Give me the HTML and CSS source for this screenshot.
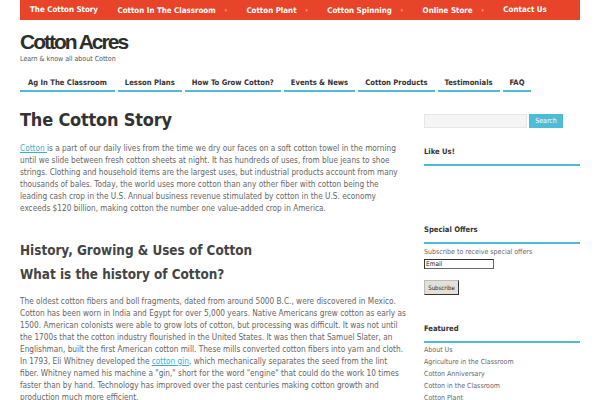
FILE: index.html
```html
<!DOCTYPE html>
<html>
<head>
<meta charset="utf-8">
<link rel="stylesheet" href="styles.css">
</head>
<body>
<div class="page">
  <nav class="topnav">
    <a>The Cotton Story</a>
    <a>Cotton In The Classroom <span class="caret">&#9662;</span></a>
    <a>Cotton Plant <span class="caret">&#9662;</span></a>
    <a>Cotton Spinning <span class="caret">&#9662;</span></a>
    <a>Online Store <span class="caret">&#9662;</span></a>
    <a>Contact Us</a>
  </nav>
  <header class="brand">
    <div class="site-title">Cotton Acres</div>
    <div class="tagline">Learn &amp; know all about Cotton</div>
  </header>
  <nav class="subnav">
    <a>Ag In The Classroom</a>
    <a>Lesson Plans</a>
    <a>How To Grow Cotton?</a>
    <a>Events &amp; News</a>
    <a>Cotton Products</a>
    <a>Testimonials</a>
    <a>FAQ</a>
  </nav>
  <div class="columns">
    <main class="content">
      <h1>The Cotton Story</h1>
      <p><a class="link">Cotton </a>is a part of our daily lives from the time we dry our faces on a soft cotton towel in the morning until we slide between fresh cotton sheets at night. It has hundreds of uses, from blue jeans to shoe strings. Clothing and household items are the largest uses, but industrial products account from many thousands of bales. Today, the world uses more cotton than any other fiber with cotton being the leading cash crop in the U.S. Annual business revenue stimulated by cotton in the U.S. economy exceeds $120 billion, making cotton the number one value-added crop in America.</p>
      <h2>History, Growing &amp; Uses of Cotton</h2>
      <h2 class="q">What is the history of Cotton?</h2>
      <p>The oldest cotton fibers and boll fragments, dated from around 5000 B.C., were discovered in Mexico. Cotton has been worn in India and Egypt for over 5,000 years. Native Americans grew cotton as early as 1500. American colonists were able to grow lots of cotton, but processing was difficult. It was not until the 1700s that the cotton industry flourished in the United States. It was then that Samuel Slater, an Englishman, built the first American cotton mill. These mills converted cotton fibers into yarn and cloth. In 1793, Eli Whitney developed the <a class="link">cotton gin</a>, which mechanically separates the seed from the lint fiber. Whitney named his machine a "gin," short for the word "engine" that could do the work 10 times faster than by hand. Technology has improved over the past centuries making cotton growth and production much more efficient.</p>
    </main>
    <aside class="sidebar">
      <div class="search">
        <div class="search-box"></div>
        <div class="search-btn">Search</div>
      </div>
      <div class="widget like">
        <h3>Like Us!</h3>
      </div>
      <div class="widget offers">
        <h3>Special Offers</h3>
        <div class="sub-text">Subscribe to receive special offers</div>
        <div class="email">Email</div>
        <div class="subscribe">Subscribe</div>
      </div>
      <div class="widget featured">
        <h3>Featured</h3>
        <ul>
          <li>About Us</li>
          <li>Agriculture in the Classroom</li>
          <li>Cotton Anniversary</li>
          <li>Cotton in the Classroom</li>
          <li>Cotton Plant</li>
        </ul>
      </div>
    </aside>
  </div>
</div>
</body>
</html>
```
FILE: styles.css
```css
* { box-sizing: border-box; }
html, body { margin: 0; padding: 0; background: #fff; }
body {
  font-family: "DejaVu Sans Condensed", "DejaVu Sans", sans-serif;
  font-stretch: condensed;
  color: #555;
  overflow: hidden;
}
.page { width: 560px; margin: 0 0 0 20px; }

.topnav {
  display: flex;
  height: 20px;
  background: #e8442a;
  padding-left: 10px;
  position: relative;
}
.topnav::before, .topnav::after {
  content: "";
  position: absolute;
  top: 16px;
  height: 6px;
  border-radius: 50%;
  box-shadow: 0 4px 3px rgba(0,0,0,0.55);
  z-index: -1;
}
.topnav::before { left: 6px; width: 95px; transform: rotate(-1.5deg); }
.topnav::after { right: 4px; width: 80px; transform: rotate(1.5deg); }
.topnav a {
  color: #fff;
  font-weight: bold;
  font-size: 7.9px;
  line-height: 20px;
  margin-right: 19.5px;
  white-space: nowrap;
}
.caret { color: #f4a090; font-size: 5px; margin-left: 6.5px; vertical-align: 1px; }

.brand { padding-top: 11px; }
.site-title {
  font-family: "Liberation Sans", sans-serif;
  font-stretch: normal;
  font-weight: bold;
  font-size: 21px;
  letter-spacing: -2px;
  color: #2e2e2e;
  line-height: 22px;
}
.tagline { font-size: 7px; color: #555; margin-top: 2px; }

.subnav { display: flex; gap: 3px; margin-top: 13px; }
.subnav a {
  font-weight: bold;
  font-size: 7.6px;
  color: #333;
  padding: 0 7px;
  line-height: 14px;
  border-bottom: 2px solid #4dbcd4;
  white-space: nowrap;
}
.subnav a:first-child { padding: 0 8px; }

.columns { display: flex; gap: 17px; margin-top: 16px; }
.content { width: 387px; }
.sidebar { width: 156px; }

h1 {
  margin: 0;
  font-size: 18px;
  line-height: 24px;
  color: #333;
  letter-spacing: -0.2px;
}
p { font-size: 8.2px; line-height: 12px; margin: 10px 0 0 0; color: #666; }
.link { color: #3aaed0; text-decoration: underline; }
h2 { font-size: 13.4px; color: #444; margin: 27px 0 0 0; line-height: 20px; }
h2.q { margin-top: 4px; }

.search { display: flex; gap: 2px; margin-top: 6px; }
.search-box { width: 103px; height: 14px; background: #f5f5f5; border: 1px solid #e6e6e6; }
.search-btn { width: 34px; height: 14px; background: #4dbcd4; color: #fff; font-size: 7px; line-height: 14px; text-align: center; }

.widget h3 {
  margin: 0;
  font-size: 7.6px;
  color: #333;
  line-height: 12px;
  padding-bottom: 6px;
  border-bottom: 2px solid #4dbcd4;
}
.like { margin-top: 18px; }
.offers { margin-top: 58px; }
.featured { margin-top: 28px; }
.sub-text { font-size: 7px; color: #666; margin-top: 3px; line-height: 10px; }
.email {
  width: 70px; height: 10px; margin-top: 2px; border: 1px solid #666; border-top-color: #333; border-left-color: #333;
  font-size: 6.5px; color: #222; line-height: 8px; padding-left: 1px;
}
.subscribe {
  display: inline-block; margin-top: 11px; width: 35px; height: 15px; background: #e3e0da;
  border: 1px solid #bbb; border-right-color: #333; border-bottom-color: #333;
  font-size: 6px; color: #222; line-height: 13px; text-align: center;
}
.featured ul { list-style: none; margin: 1px 0 0 0; padding: 0; }
.featured li { font-size: 7px; line-height: 12px; color: #666; }
```
